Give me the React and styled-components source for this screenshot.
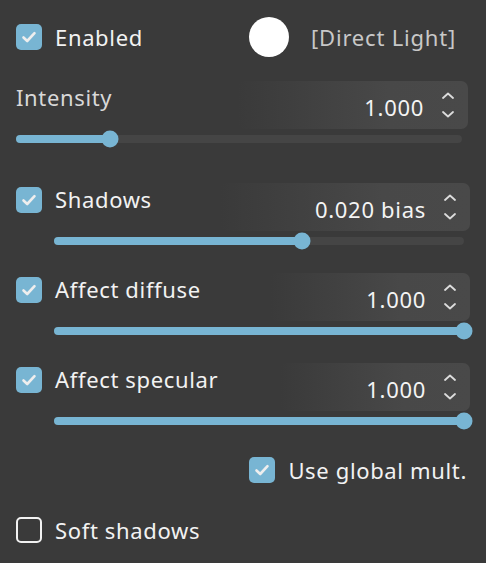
import styled, { createGlobalStyle } from 'styled-components'

const GlobalStyle = createGlobalStyle`
  body {
    margin: 0;
    background: #3a3a3a;
    font-family: 'Noto Sans', 'Open Sans', sans-serif;
  }
`

const ACCENT = '#78b5d3'

const Panel = styled.div`
  width: 486px;
  height: 563px;
  box-sizing: border-box;
  padding: 17px 16px 0 16px;
  display: flex;
  flex-direction: column;
`
const TopRow = styled.div`
  display: flex;
  align-items: center;
  height: 40px;
  padding-right: 14px;
`
const Box = styled.span`
  flex: none;
  width: 26px;
  height: 26px;
  box-sizing: border-box;
  border-radius: 5px;
  background: ${p => (p.$checked ? ACCENT : 'transparent')};
  border: ${p => (p.$checked ? 'none' : '2px solid #f2f2f2')};
  display: flex;
  align-items: center;
  justify-content: center;
  margin-top: ${p => p.$offset || 0}px;
`
const Label = styled.span`
  font-size: 22px;
  letter-spacing: 0.65px;
  line-height: 26px;
  color: ${p => p.$color || '#f2f2f2'};
  margin-left: ${p => p.$indent ?? 13}px;
  margin-top: ${p => p.$offset || 0}px;
  white-space: nowrap;
`
const Swatch = styled.span`
  width: 40px;
  height: 40px;
  border-radius: 50%;
  background: #ffffff;
  margin-left: auto;
`
const Tag = styled.span`
  font-size: 22px;
  letter-spacing: 0.8px;
  color: #c8c8c8;
  margin-left: 22px;
`
const Block = styled.div`
  margin-top: ${p => p.$gap}px;
  display: flex;
  flex-direction: column;
`
const Row = styled.div`
  display: flex;
  align-items: flex-start;
`
const NumberBox = styled.div`
  margin-left: auto;
  width: ${p => p.$width}px;
  height: 48px;
  border-radius: 7px;
  background: linear-gradient(90deg, rgba(72, 72, 72, 0) 0%, #484848 65%, #494949 100%);
  display: flex;
  align-items: center;
  justify-content: flex-end;
  padding-right: 8px;
  box-sizing: border-box;
  margin-right: ${p => p.$right || 0}px;
`
const Value = styled.span`
  font-size: 22px;
  letter-spacing: 0.7px;
  color: #f4f4f4;
  margin-top: 3px;
`
const Spinner = styled.div`
  width: 24px;
  margin-left: 12px;
  display: flex;
  flex-direction: column;
  align-items: center;
  gap: 12px;
`
const Track = styled.div`
  position: relative;
  height: 8px;
  border-radius: 4px;
  background: #454545;
  margin-top: 6px;
  margin-left: ${p => p.$indent || 0}px;
  margin-right: ${p => p.$right || 0}px;
`
const Fill = styled.div`
  height: 100%;
  border-radius: 4px;
  background: ${ACCENT};
`
const Thumb = styled.div`
  position: absolute;
  top: 50%;
  width: 17px;
  height: 17px;
  border-radius: 50%;
  background: ${ACCENT};
  transform: translate(-50%, -50%);
`
const CheckRow = styled.div`
  display: flex;
  align-items: center;
  margin-top: ${p => p.$gap}px;
  justify-content: ${p => (p.$end ? 'flex-end' : 'flex-start')};
  padding-right: ${p => (p.$end ? 3 : 0)}px;
`

function Check({ checked = true, offset }) {
  return (
    <Box $checked={checked} $offset={offset}>
      {checked && (
        <svg width="16" height="16" viewBox="0 0 16 16">
          <path d="M2.5 8.5 L6.2 12 L13.5 4.2" fill="none" stroke="#eeeeee" strokeWidth="2.6" strokeLinecap="round" strokeLinejoin="round" />
        </svg>
      )}
    </Box>
  )
}

function Chevron({ up }) {
  return (
    <svg width="12" height="7" viewBox="0 0 12 7">
      <path d={up ? 'M1 6 L6 1.5 L11 6' : 'M1 1 L6 5.5 L11 1'} fill="none" stroke="#dcdcdc" strokeWidth="1.8" strokeLinecap="round" strokeLinejoin="round" />
    </svg>
  )
}

function NumberField({ value, width, right }) {
  return (
    <NumberBox $width={width} $right={right}>
      <Value>{value}</Value>
      <Spinner>
        <Chevron up />
        <Chevron />
      </Spinner>
    </NumberBox>
  )
}

function Slider({ pct, indent, right }) {
  return (
    <Track $indent={indent} $right={right}>
      <Fill style={{ width: `${pct}%` }} />
      <Thumb style={{ left: `${pct}%` }} />
    </Track>
  )
}

function CheckedSetting({ label, value, pct, gap, width }) {
  return (
    <Block $gap={gap}>
      <Row>
        <Check offset={4} />
        <Label $offset={3}>{label}</Label>
        <NumberField value={value} width={width} />
      </Row>
      <Slider pct={pct} indent={38} right={6} />
    </Block>
  )
}

export default function App() {
  return (
    <>
      <GlobalStyle />
      <Panel>
        <TopRow>
          <Check />
          <Label>Enabled</Label>
          <Swatch />
          <Tag>[Direct Light]</Tag>
        </TopRow>

        <Block $gap={24}>
          <Row>
            <Label $indent={0} $offset={3} $color="#d8d8d8">Intensity</Label>
            <NumberField value="1.000" width={230} right={2} />
          </Row>
          <Slider pct={21} right={8} />
        </Block>

        <CheckedSetting label="Shadows" value="0.020 bias" pct={60.5} gap={40} width={250} />
        <CheckedSetting label="Affect diffuse" value="1.000" pct={100} gap={28} width={200} />
        <CheckedSetting label="Affect specular" value="1.000" pct={100} gap={28} width={190} />

        <CheckRow $gap={32} $end>
          <Check />
          <Label>Use global mult.</Label>
        </CheckRow>

        <CheckRow $gap={34}>
          <Check checked={false} />
          <Label>Soft shadows</Label>
        </CheckRow>
      </Panel>
    </>
  )
}
